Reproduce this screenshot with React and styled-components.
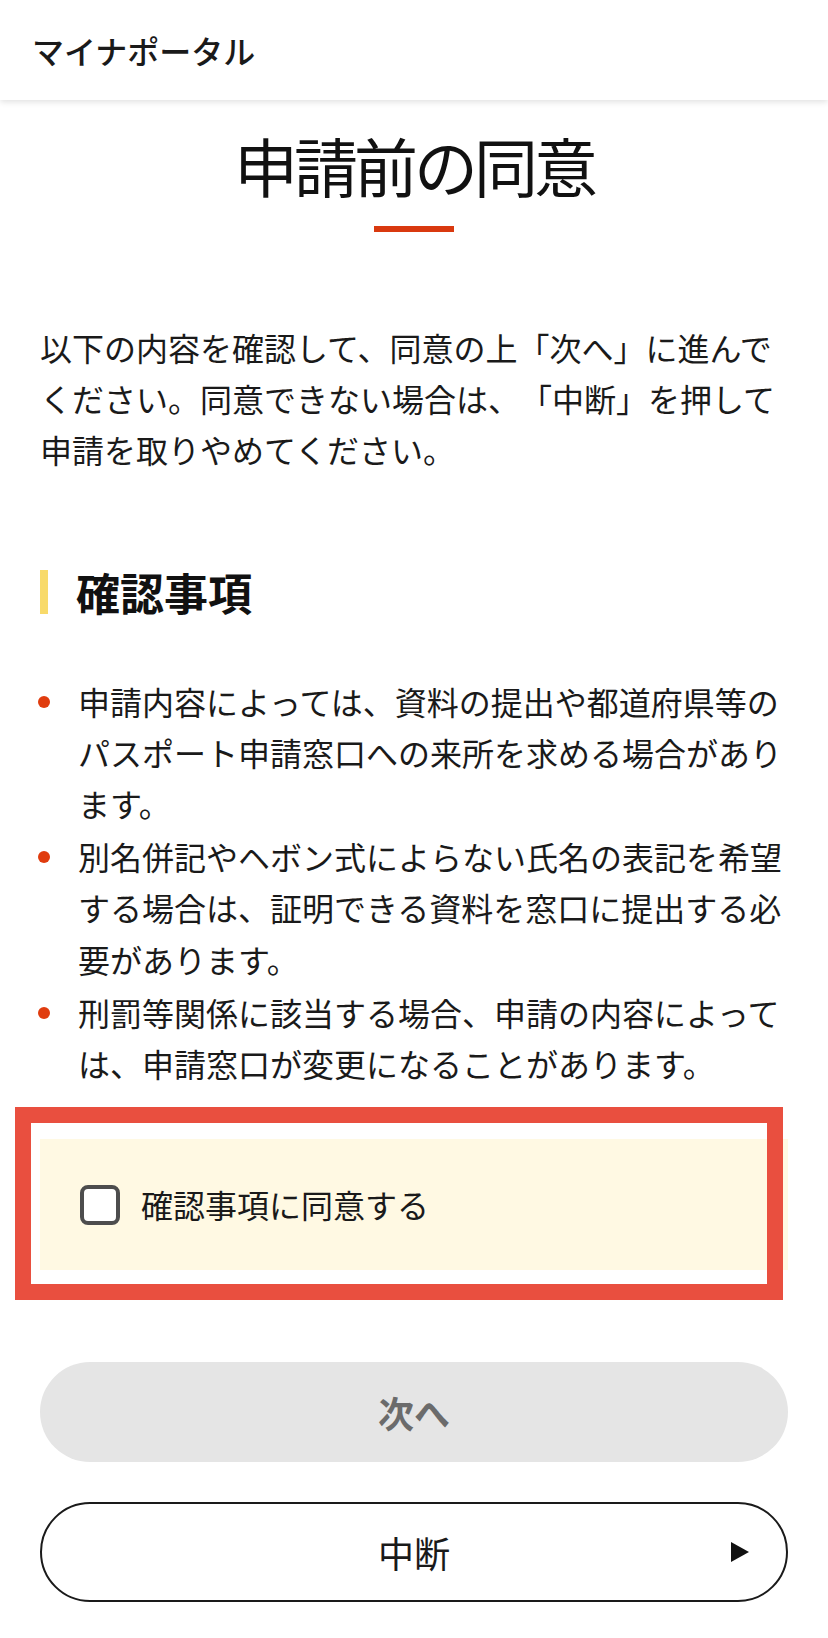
import React from 'react'
import styled, { createGlobalStyle } from 'styled-components'

const GlobalStyle = createGlobalStyle`
  html, body {
    margin: 0;
    padding: 0;
    background: #ffffff;
  }
  body {
    font-family: "Noto Sans CJK JP", "Noto Sans", sans-serif;
    color: #1a1a1a;
    text-spacing-trim: space-all;
  }
  * {
    box-sizing: border-box;
  }
`

const Header = styled.header`
  display: flex;
  align-items: center;
  height: 100px;
  padding: 0 32px;
  background: #ffffff;
  box-shadow: 0 2px 6px rgba(0, 0, 0, 0.12);
  position: relative;
  z-index: 1;
`

const Brand = styled.span`
  font-size: 32px;
  font-weight: 500;
  color: #1a1a1a;
`

const Main = styled.main`
  display: flex;
  flex-direction: column;
  padding: 19px 40px 36px;
`

const Title = styled.h1`
  margin: 0;
  font-size: 64px;
  font-weight: 400;
  letter-spacing: -4px;
  line-height: 90px;
  text-align: center;
  color: #111;
`

const Divider = styled.span`
  display: block;
  width: 80px;
  height: 6px;
  margin: 17px auto 0;
  background: #d9390f;
`

const Lead = styled.p`
  margin: 90px 0 0;
  font-size: 32px;
  line-height: 51.2px;
`

const SectionHeading = styled.h2`
  margin: 94px 0 0;
  padding-left: 28px;
  border-left: 8px solid #f8da6a;
  font-size: 44px;
  font-weight: 700;
  line-height: 44px;
  color: #111;
`

const List = styled.ul`
  display: flex;
  flex-direction: column;
  gap: 2px;
  margin: 62px 0 0;
  padding: 0;
  list-style: none;
`

const Item = styled.li`
  position: relative;
  padding-left: 38px;
  font-size: 32px;
  line-height: 51.2px;

  &::before {
    content: '';
    position: absolute;
    left: -2px;
    top: 20px;
    width: 12px;
    height: 12px;
    border-radius: 50%;
    background: #e03c0e;
  }
`

const ConsentPanel = styled.label`
  position: relative;
  display: flex;
  align-items: center;
  gap: 21px;
  margin-top: 50px;
  padding: 40px;
  background: #fff9e3;
  font-size: 32px;
  line-height: 51.2px;
  cursor: pointer;
`

const Highlight = styled.span`
  position: absolute;
  top: -32px;
  left: -25px;
  right: 5px;
  bottom: -30px;
  border: 16px solid #e94f3f;
  pointer-events: none;
`

const Checkbox = styled.span`
  flex: none;
  width: 40px;
  height: 40px;
  border: 4px solid #4d4d4d;
  border-radius: 8px;
  background: #ffffff;
`

const PillButton = styled.button`
  position: relative;
  display: flex;
  align-items: center;
  justify-content: center;
  width: 100%;
  height: 100px;
  margin-top: ${({ $gap }) => $gap}px;
  border-radius: 50px;
  font-family: inherit;
  font-size: 36px;
  cursor: pointer;
  border: ${({ $outline }) => ($outline ? '2px solid #1a1a1a' : 'none')};
  background: ${({ $outline }) => ($outline ? '#ffffff' : '#e5e5e5')};
  color: ${({ $outline }) => ($outline ? '#1a1a1a' : '#6b6b6b')};
  font-weight: ${({ $outline }) => ($outline ? 400 : 700)};
`

const Arrow = styled.svg`
  position: absolute;
  right: 37px;
  top: 50%;
  transform: translateY(-50%);
`

const items = [
  '申請内容によっては、資料の提出や都道府県等のパスポート申請窓口への来所を求める場合があります。',
  '別名併記やヘボン式によらない氏名の表記を希望する場合は、証明できる資料を窓口に提出する必要があります。',
  '刑罰等関係に該当する場合、申請の内容によっては、申請窓口が変更になることがあります。',
]

export default function App() {
  return (
    <>
      <GlobalStyle />
      <Header>
        <Brand>マイナポータル</Brand>
      </Header>
      <Main>
        <Title>申請前の同意</Title>
        <Divider />
        <Lead>
          以下の内容を確認して、同意の上「次へ」に進んでください。同意できない場合は、「中断」を押して申請を取りやめてください。
        </Lead>
        <SectionHeading>確認事項</SectionHeading>
        <List>
          {items.map((text) => (
            <Item key={text}>{text}</Item>
          ))}
        </List>
        <ConsentPanel>
          <Checkbox />
          <span>確認事項に同意する</span>
          <Highlight />
        </ConsentPanel>
        <PillButton $gap={92} disabled>
          次へ
        </PillButton>
        <PillButton $gap={40} $outline>
          中断
          <Arrow width="18" height="20" viewBox="0 0 18 20">
            <path d="M0 0 L18 10 L0 20 Z" fill="#111" />
          </Arrow>
        </PillButton>
      </Main>
    </>
  )
}
